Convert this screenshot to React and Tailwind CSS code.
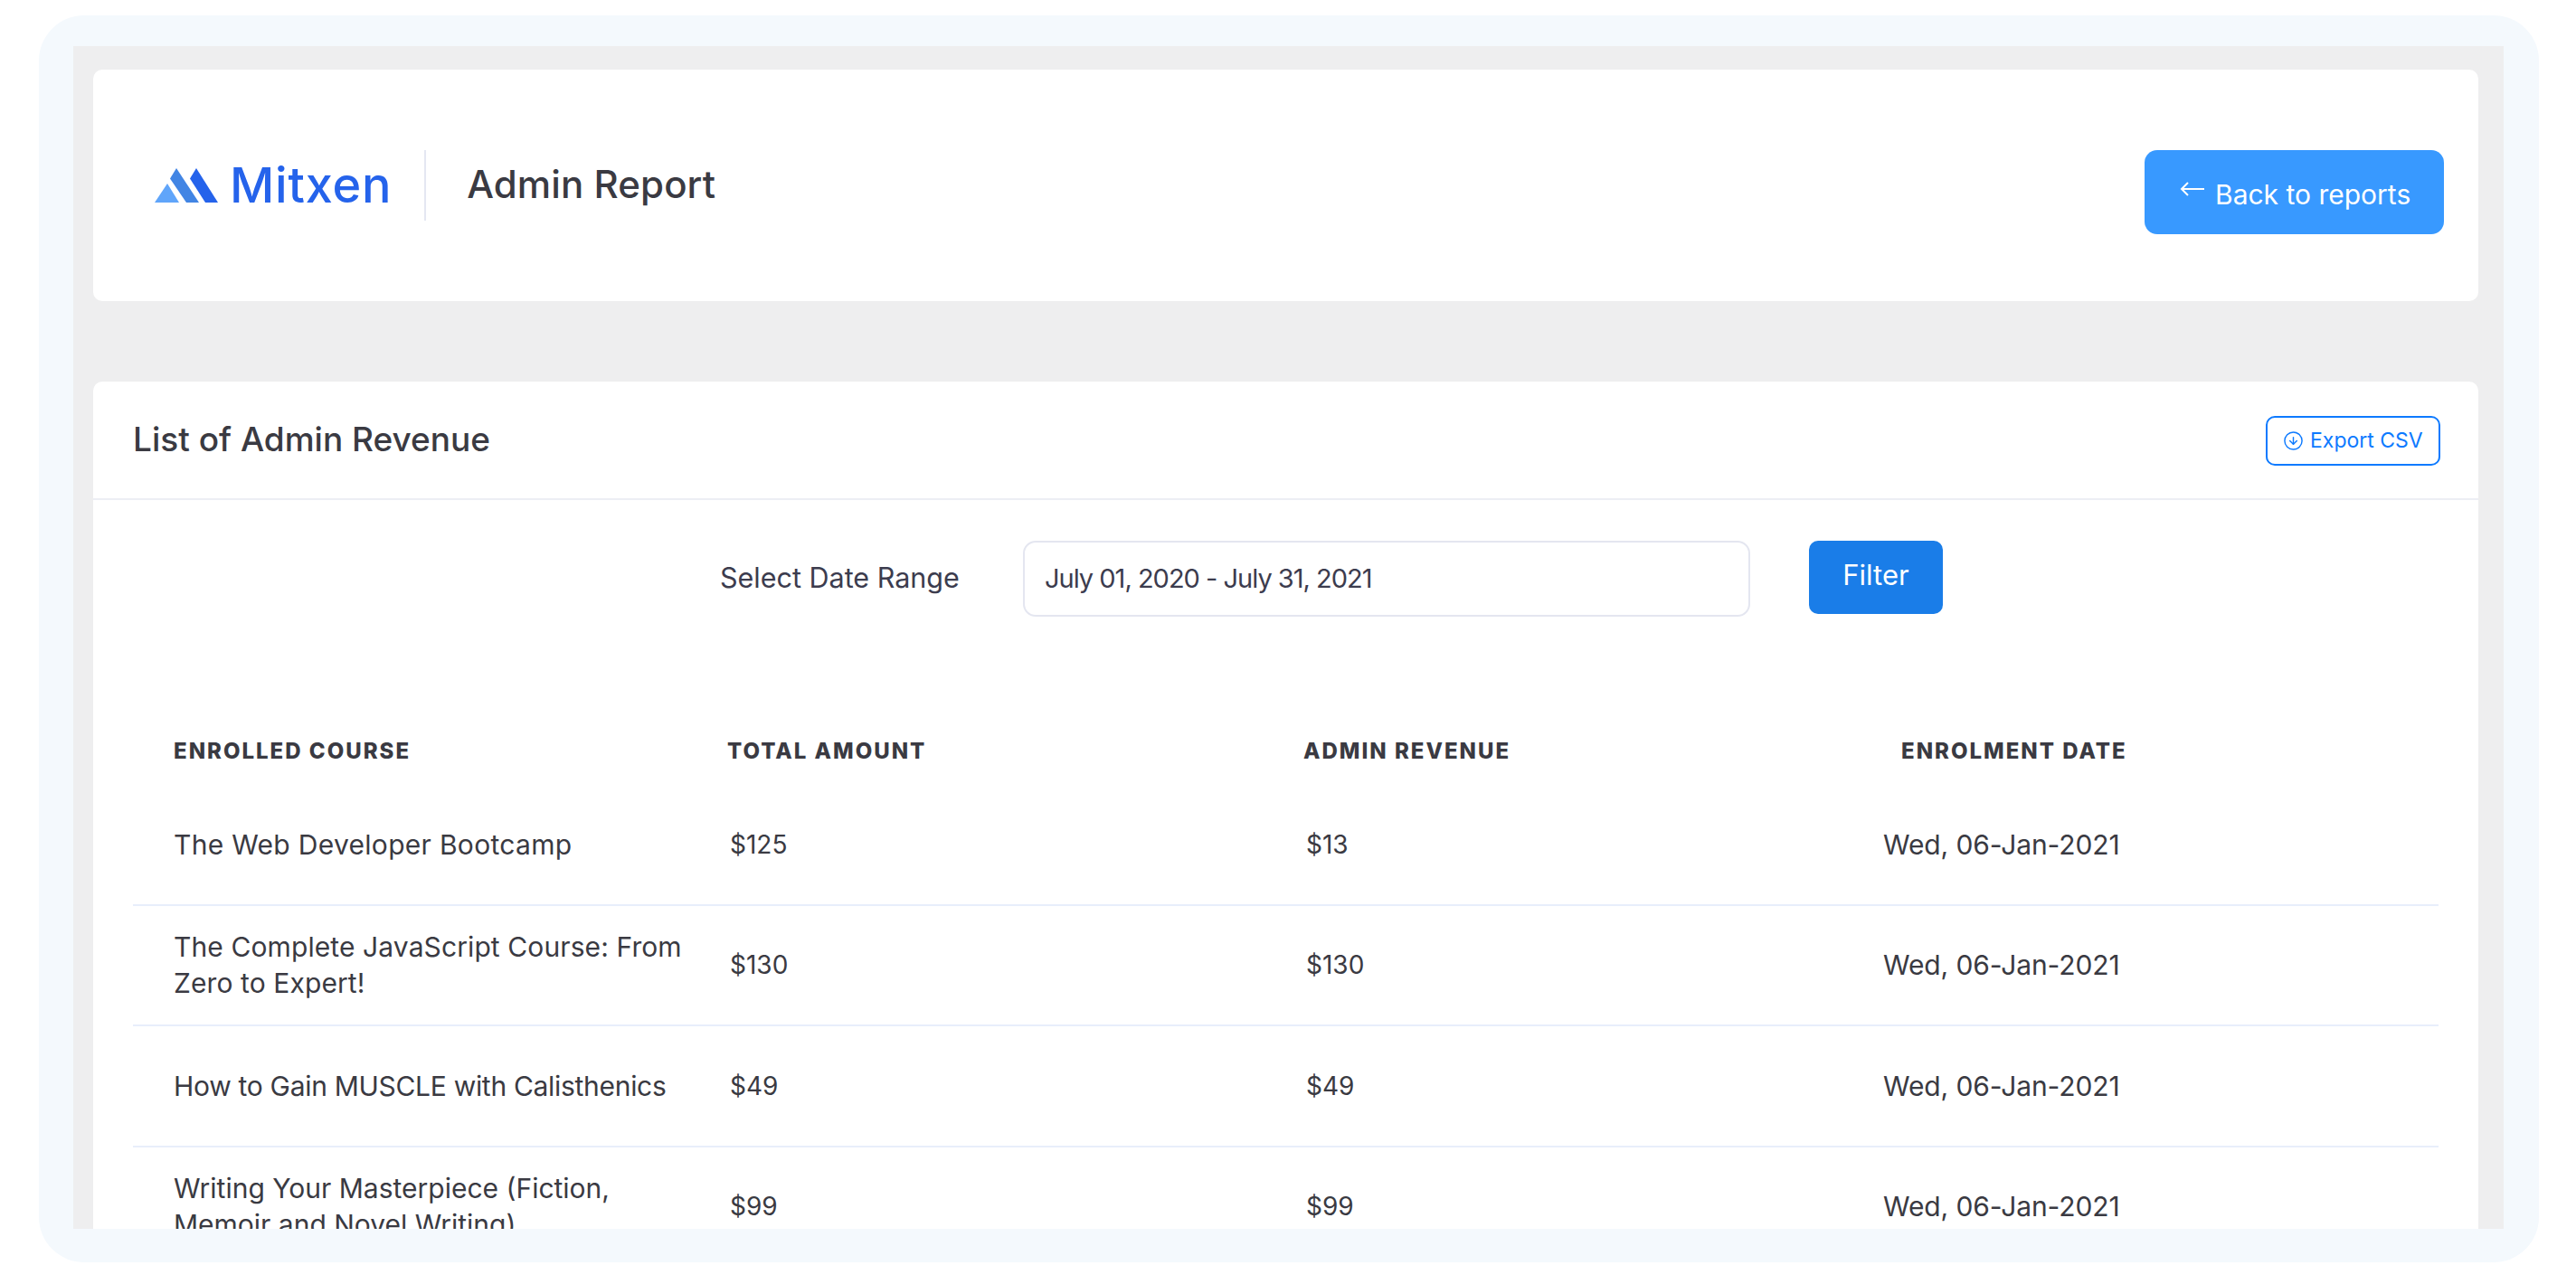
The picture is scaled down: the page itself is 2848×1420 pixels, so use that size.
import React from "react";
import { CircleArrowDown } from "lucide-react";

const rows = [
  ["The Web Developer Bootcamp", "$125", "$13", "tracking-[0.3px]"],
  ["The Complete JavaScript Course: From Zero to Expert!", "$130", "$130", "tracking-[0.1px]"],
  ["How to Gain MUSCLE with Calisthenics", "$49", "$49", "tracking-[-0.3px]"],
  ["Writing Your Masterpiece (Fiction, Memoir and Novel Writing)", "$99", "$99", "tracking-[0px]"],
];

function Logo() {
  return (
    <svg width="72" height="40" viewBox="0 0 72 40" className="shrink-0">
      <polygon points="0,39 14,18 27,39" fill="#60a5fa" />
      <polygon points="17,12.5 24,1 49,39 35,39" fill="#4285e4" />
      <polygon points="39,12.5 46,1 70,39 56,39" fill="#2563eb" />
    </svg>
  );
}

export default function App() {
  return (
    <div className="h-[1420px] bg-white pt-[17px] pb-[24px] pl-[43px] pr-[41px] font-['Inter','Liberation_Sans',sans-serif] text-[#3a3a42]">
      <div className="flex h-[1379px] flex-col overflow-hidden rounded-[50px] bg-[#f4f9fd] pt-[34px] pb-[37px] pl-[38px] pr-[39px]">
        <div className="flex-1 overflow-hidden bg-[#eeeeef] pl-[22px] pr-[28px] pt-[26px]">
          <header className="flex h-[256px] items-center rounded-[10px] bg-white pl-[68px] pr-[38px]">
            <Logo />
            <span className="ml-[11px] text-[54px] leading-none font-medium tracking-[0.8px] text-[#2563eb]">Mitxen</span>
            <div className="ml-[36px] h-[78px] w-[2px] bg-[#e4e7f2]" />
            <h1 className="ml-[45px] mb-[3px] text-[42px] leading-none font-medium tracking-[0.1px]">Admin Report</h1>
            <a className="mt-[15px] ml-auto flex h-[93px] w-[331px] items-center rounded-[14px] bg-[#3899ff] pl-[39px] text-[30px] text-white">
              <svg width="28" height="16" viewBox="0 0 28 16" fill="none" stroke="currentColor" strokeWidth="2" className="mb-[7px]">
                <path d="M27 8H2M9 1 2 8l7 7" />
              </svg>
              <span className="ml-[11px] mt-[6px]">Back to reports</span>
            </a>
          </header>

          <section className="mt-[89px] h-[1000px] rounded-t-[10px] bg-white">
            <div className="flex h-[131px] items-center justify-between border-b-2 border-[#eceef4] pl-[44px] pr-[42px]">
              <h2 className="mb-[2px] text-[37px] leading-none font-medium">List of Admin Revenue</h2>
              <a className="mt-[2px] flex h-[55px] w-[193px] items-center rounded-[10px] border-2 border-[#0d7aff] pl-[17px] text-[23px] text-[#0d7aff]">
                <CircleArrowDown size={23} strokeWidth={1.5} />
                <span className="ml-[7px]">Export CSV</span>
              </a>
            </div>

            <div className="flex items-start pt-[45px] pl-[693px]">
              <label className="mt-[23px] w-[335px] text-[30.5px] leading-[36px] text-[#3c3c4e]">Select Date Range</label>
              <div className="flex h-[84px] w-[804px] items-center rounded-[14px] border-2 border-[#e4e6f0] pl-[22px] text-[29px] tracking-[-1px] text-[#3c3c4e]">July 01, 2020 - July 31, 2021</div>
              <button className="ml-[65px] h-[81px] w-[148px] rounded-[10px] bg-[#1a7de8] pb-[4px] text-[31px] text-white">Filter</button>
            </div>

            <div className="mx-[44px] mt-[134px]">
              <div className="grid h-[46px] grid-cols-[657px_637px_638px_1fr] text-[24px] leading-[30px] font-extrabold tracking-[2px]">
                <div className="pl-[45px]">ENROLLED COURSE</div>
                <div>TOTAL AMOUNT</div>
                <div>ADMIN REVENUE</div>
                <div className="pl-[23px]">ENROLMENT DATE</div>
              </div>
              <div className="mt-[6px]">
                {rows.map((r) => (
                  <div key={r[0]} className="grid h-[133.5px] grid-cols-[660px_637px_638px_1fr] items-center border-b-2 border-[#e8eefb] text-[30px] leading-[40px]">
                    <div className={"pl-[45px] pr-[35px] " + r[3]}>{r[0]}</div>
                    <div className="text-[28px]">{r[1]}</div>
                    <div className="text-[28px]">{r[2]}</div>
                    <div className="tracking-[-0.1px]">Wed, 06-Jan-2021</div>
                  </div>
                ))}
              </div>
            </div>
          </section>
        </div>
      </div>
    </div>
  );
}
